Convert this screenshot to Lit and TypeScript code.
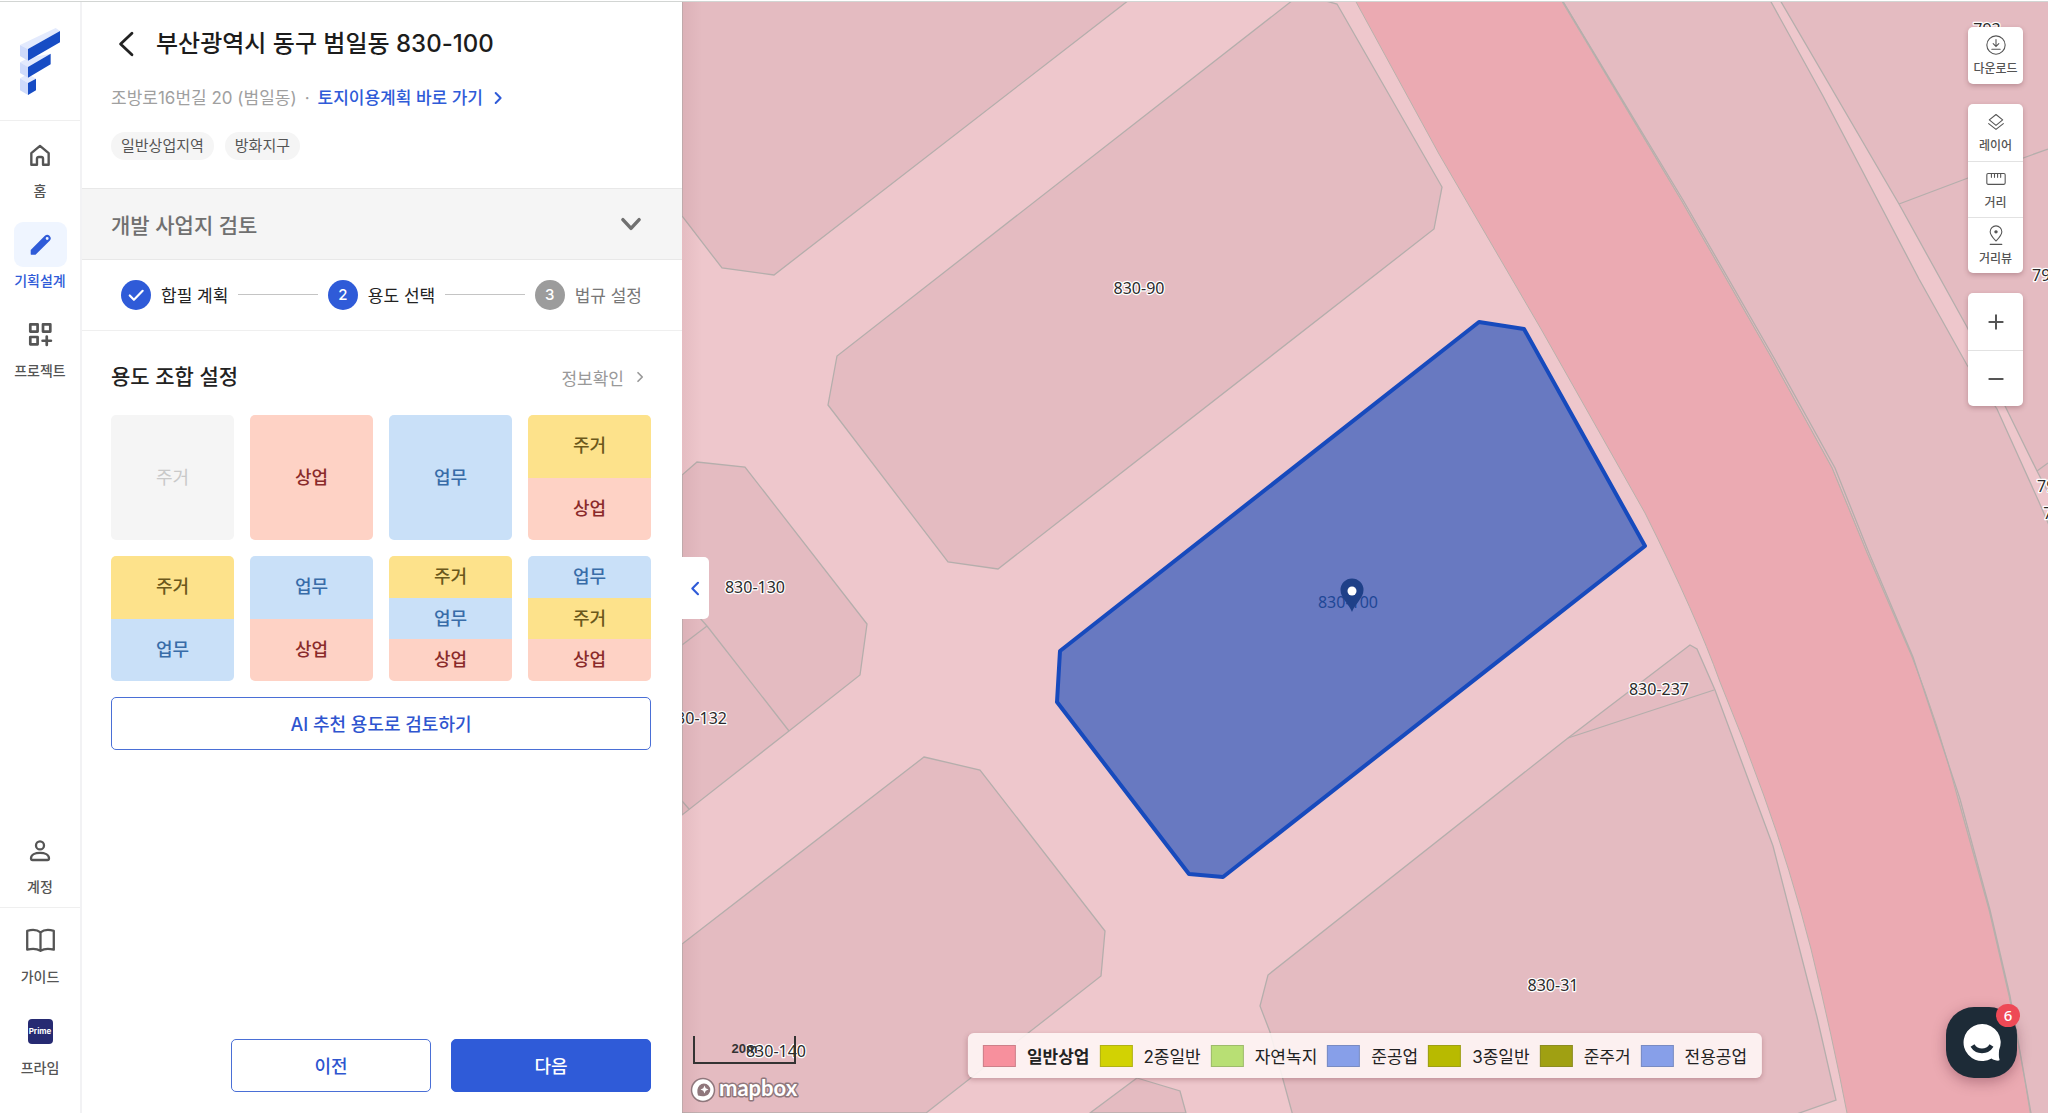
import { LitElement, html, svg, css, nothing } from "lit";
import { customElement, state } from "lit/decorators.js";
import { classMap } from "lit/directives/class-map.js";

const icons: Record<string, unknown> = {
  home: svg`<path d="M4 10.2 12 3.6l8 6.6V21h-5.2v-5.6a1.6 1.6 0 0 0-1.6-1.6h-2.4a1.6 1.6 0 0 0-1.6 1.6V21H4z" fill="none" stroke="currentColor" stroke-width="2.2" stroke-linejoin="round"/>`,
  pencil: svg`<path fill-rule="evenodd" fill="currentColor" d="M2.6 17.3 16.2 3.7a3.2 3.2 0 0 1 4.5 0l.1.1a3.2 3.2 0 0 1 0 4.5L7.2 21.9H3.4a.8.8 0 0 1-.8-.8zM18.4 4.9a1.4 1.4 0 1 0 0 2.8 1.4 1.4 0 0 0 0-2.8z"/>`,
  project: svg`<g fill="none" stroke="currentColor" stroke-width="2.6" stroke-linejoin="round"><path d="M2.2 2.2h7v7h-7zM14.4 2.2h7v7h-7zM2.2 14.4h7v7h-7zM18 14v8M14 18h8" stroke-linecap="round"/></g>`,
  account: svg`<g fill="none" stroke="currentColor" stroke-width="2.3"><circle cx="12" cy="6.4" r="4"/><path d="M3 19.2c0-3.6 4.4-5.4 9-5.4s9 1.8 9 5.4c0 1.2-.6 1.8-1.6 1.8H4.6c-1 0-1.6-.6-1.6-1.8z" stroke-linejoin="round"/></g>`,
  guide: svg`<path d="M12 5.200C9.200 3 5 2.900 1 4v15.600c4-1.100 8.200-.9 11 1 2.800-1.900 7-2.100 11-1V4c-4-1.100-8.200-1-11 1.200zm0 0v15" fill="none" stroke="currentColor" stroke-width="1.900" stroke-linejoin="round"/>`,
  download: svg`<g fill="none" stroke="currentColor" stroke-width="1.300" stroke-linecap="round"><circle cx="12" cy="12" r="11"/><path d="M12 5.500v8M8.600 10.400 12 13.700l3.400-3.300M7 17h10"/></g>`,
  layer: svg`<g fill="none" stroke="currentColor" stroke-width="1.300" stroke-linejoin="round" stroke-linecap="round"><path d="M12 3l8 6.500-8 6.500-8-6.500zM3.200 14l8.800 6.800 8.800-6.800"/></g>`,
  ruler: svg`<g fill="none" stroke="currentColor" stroke-width="1.300" stroke-linecap="round"><rect x="1" y="5.400" width="22" height="13" rx="1.500"/><path d="M6.500 6v4M10.200 6v4M13.900 6v4M17.600 6v4"/></g>`,
  view: svg`<g fill="none" stroke="currentColor" stroke-width="1.300" stroke-linecap="round"><path d="M12 19.200c-3.600-3.800-7-7.200-7-11.200a7 7 0 0 1 14 0c0 4-3.400 7.400-7 11.200z"/><circle cx="12" cy="8.200" r="1.400" fill="currentColor"/><path d="M5 23.200h14"/></g>`,
  plus: svg`<path d="M12 4v16M4 12h16" stroke="currentColor" stroke-width="2.400" stroke-linecap="round"/>`,
  minus: svg`<path d="M4 12h16" stroke="currentColor" stroke-width="2.400" stroke-linecap="round"/>`,
  left: svg`<path d="M15.500 4 7.500 12l8 8" fill="none" stroke="currentColor" stroke-width="3" stroke-linecap="round" stroke-linejoin="round"/>`,
  back: svg`<path d="M17.500 2 7 12l10.500 10" fill="none" stroke="currentColor" stroke-width="2.600" stroke-linecap="round" stroke-linejoin="round"/>`,
  right: svg`<path d="m8 3.500 8.500 8.500L8 20.500" fill="none" stroke="currentColor" stroke-width="3.400" stroke-linecap="round" stroke-linejoin="round"/>`,
  down: svg`<path d="m4.500 8 7.500 8 7.500-8" fill="none" stroke="currentColor" stroke-width="3.200" stroke-linecap="round" stroke-linejoin="round"/>`,
  check: svg`<path d="m4.500 12.500 5 5.200L20 7" fill="none" stroke="currentColor" stroke-width="2.600" stroke-linecap="round" stroke-linejoin="round"/>`,
};

const icon = (name: string, size: number) =>
  html`<svg width=${size} height=${size} viewBox="0 0 24 24" aria-hidden="true">${icons[name]}</svg>`;

const base = css`
  * { box-sizing: border-box; }
  svg { display: block; flex: none; }
  button { font: inherit; color: inherit; border: 0; background: none; padding: 0; margin: 0; cursor: pointer; }
  a { color: inherit; text-decoration: none; }
`;

@customElement("side-nav")
class SideNav extends LitElement {
  static styles = [base, css`
    :host { display: flex; flex-direction: column; flex: none; width: 82px; border-right: 2px solid #f2f2f4; background: #fff; color: #555; }
    .brand { display: flex; justify-content: center; height: 119px; padding-top: 25px; border-bottom: 1px solid #efefef; }
    .group { display: flex; flex-direction: column; gap: 21px; padding-top: 11px; }
    .top { flex: 1; }
    .account { padding-bottom: 10px; border-bottom: 1px solid #efefef; }
    .help { padding: 10px 0 35px; gap: 22px; }
    .item { display: flex; flex-direction: column; align-items: center; gap: 4px; font-size: 14px; line-height: 20px; font-weight: 500; white-space: nowrap; }
    .tile { display: grid; place-items: center; width: 53px; height: 45px; border-radius: 9px; }
    .active { color: #2f5bd8; }
    .active .tile { background: #eff5ff; }
    .prime { display: grid; place-items: center; width: 25px; height: 25px; border-radius: 4px; background: #262a72; color: #fff; font: 700 8px/25px Inter, sans-serif; }
  `];

  private item(name: string, label: string, size: number, active = false) {
    return html`<a class=${classMap({ item: true, active })} href="#">
      <span class="tile">${name === "prime" ? html`<span class="prime">Prime</span>` : icon(name, size)}</span>
      ${label}
    </a>`;
  }

  render() {
    return html`
      <a class="brand" href="#" aria-label="home">
        <svg width="42" height="70" viewBox="57 81 126 210">
          <path fill="#e3eafd" d="M60 135 167 84l13 9-96 54zM60 187l24-13 68-13-68 41zM60 235l24-13 24 14-24 13z"/>
          <path fill="#cfdbfb" d="M60 135l24 12v35l-24-14zM60 187l24 14v32l-24-14zM60 235l24 14v36l-24-14z"/>
          <path fill="#174cc4" d="M84 147l96-54v34l-96 55zM84 201l68-40v32l-68 40zM84 249l24-13v35l-24 14z"/>
        </svg>
      </a>
      <nav class="group top">
        ${this.item("home", "홈", 26)}
        ${this.item("pencil", "기획설계", 25, true)}
        ${this.item("project", "프로젝트", 25)}
      </nav>
      <nav class="group account">${this.item("account", "계정", 24)}</nav>
      <nav class="group help">
        ${this.item("guide", "가이드", 29)}
        ${this.item("prime", "프라임", 25)}
      </nav>
    `;
  }
}

type Use = "home" | "shop" | "work";
const useNames: Record<Use, string> = { home: "주거", shop: "상업", work: "업무" };
const combos: { uses: Use[]; disabled?: boolean }[] = [
  { uses: ["home"], disabled: true },
  { uses: ["shop"] },
  { uses: ["work"] },
  { uses: ["home", "shop"] },
  { uses: ["home", "work"] },
  { uses: ["work", "shop"] },
  { uses: ["home", "work", "shop"] },
  { uses: ["work", "home", "shop"] },
];

@customElement("plan-panel")
class PlanPanel extends LitElement {
  static styles = [base, css`
    :host { display: flex; flex-direction: column; flex: none; width: 600px; background: #fff; color: #222; font-size: 17px; }
    h1, h2 { margin: 0; font-weight: 500; }
    .head { padding: 24px 29px 28px; border-bottom: 1px solid #e8e8e8; }
    .title { display: flex; align-items: center; gap: 17px; padding-left: 2px; }
    .title h1 { font-size: 24px; line-height: 36px; color: #1c1c1c; }
    .address { display: flex; align-items: center; gap: 8px; margin-top: 24px; line-height: 24px; color: #a0a0a0; }
    .address a { display: flex; align-items: center; gap: 8px; color: #2f5bd8; font-weight: 500; }
    .tags { display: flex; gap: 11px; margin: 22px 0 0; padding: 0; list-style: none; }
    .tags li { padding: 0 10px; border-radius: 14px; background: #f5f5f5; color: #555; font-size: 15px; line-height: 28px; }
    .fold { display: flex; align-items: center; justify-content: space-between; width: 100%; height: 71px; padding: 0 38px 0 29px; border-bottom: 1px solid #e8e8e8; background: #f5f5f5; color: #707070; font-size: 21px; font-weight: 500; }
    .steps { display: flex; align-items: center; gap: 10px; height: 71px; margin: 0; padding: 0 40px 1px 39px; border-bottom: 1px solid #efefef; list-style: none; }
    .step { display: flex; align-items: center; gap: 10px; white-space: nowrap; }
    .bar { flex: 1; height: 1px; background: #c4c4c4; }
    .dot { display: grid; place-items: center; width: 30px; height: 30px; border-radius: 50%; background: #2f5bd8; color: #fff; font-size: 15px; font-weight: 500; }
    .later { color: #777; }
    .later .dot { background: #9c9c9c; }
    .body { display: flex; flex-direction: column; flex: 1; padding: 30px 31px 21px 29px; }
    .bar-title { display: flex; align-items: center; justify-content: space-between; padding-right: 5px; }
    .bar-title h2 { font-size: 21px; line-height: 32px; }
    .info { display: flex; align-items: center; gap: 10px; color: #999; }
    .grid { display: grid; grid-template-columns: repeat(4, 1fr); grid-auto-rows: 125px; gap: 16px; margin-top: 22px; }
    .combo { display: flex; flex-direction: column; overflow: hidden; border-radius: 5px; font-size: 18px; font-weight: 500; }
    .part { flex: 1; display: grid; place-items: center; line-height: 24px; width: 100%; }
    .home { background: #fde28b; color: #6b581b; }
    .shop { background: #fed2c5; color: #8a2b2b; }
    .work { background: #c9e0f8; color: #386ca8; }
    .combo:disabled { cursor: default; }
    .combo:disabled .part { background: #f5f5f5; color: #c9c9c9; font-weight: 400; }
    .line { height: 53px; padding-bottom: 2px; border: 1px solid #4a6fd6; border-radius: 5px; color: #2f55cf; font-size: 18px; font-weight: 500; }
    .ai { margin-top: 16px; flex: none; }
    .actions { display: flex; justify-content: flex-end; gap: 20px; margin-top: auto; }
    .actions button { width: 200px; }
    .next { background: #2f5bd8; color: #fff; border-color: #2f5bd8; }
  `];

  @state() private selected = -1;

  render() {
    return html`
      <header class="head">
        <div class="title"><button aria-label="뒤로">${icon("back", 26)}</button><h1>부산광역시 동구 범일동 830-100</h1></div>
        <div class="address">
          <span>조방로16번길 20 (범일동)</span><span>·</span>
          <a href="#">토지이용계획 바로 가기 ${icon("right", 14)}</a>
        </div>
        <ul class="tags"><li>일반상업지역</li><li>방화지구</li></ul>
      </header>
      <button class="fold" aria-expanded="false">개발 사업지 검토 ${icon("down", 26)}</button>
      <ol class="steps">
        <li class="step"><span class="dot">${icon("check", 20)}</span>합필 계획</li>
        <li class="bar" role="presentation"></li>
        <li class="step"><span class="dot">2</span>용도 선택</li>
        <li class="bar" role="presentation"></li>
        <li class="step later"><span class="dot">3</span>법규 설정</li>
      </ol>
      <section class="body">
        <div class="bar-title"><h2>용도 조합 설정</h2><button class="info">정보확인 ${icon("right", 12)}</button></div>
        <div class="grid">
          ${combos.map((c, i) => html`
            <button class="combo" ?disabled=${c.disabled ?? false} aria-pressed=${this.selected === i ? "true" : "false"} @click=${() => (this.selected = i)}>
              ${c.uses.map((u) => html`<span class="part ${u}">${useNames[u]}</span>`)}
            </button>`)}
        </div>
        <button class="line ai">AI 추천 용도로 검토하기</button>
        <div class="actions"><button class="line">이전</button><button class="line next">다음</button></div>
      </section>
    `;
  }
}

const parcels = [
  "682,0 1129,0 774,275 722,268 682,216",
  "1293,0 1322,0 1337,4 1442,187 1434,229 998,569 948,562 828,405 837,356",
  "682,475 697,462 745,467 867,624 860,675 789,731 682,815",
  "924,757 980,770 1105,931 1101,976 926,1113 682,1113 682,944",
  "1137,1078 1180,1091 1186,1113 1090,1113",
  "1690,645 1697,649 1715,690 1773,846 1817,1017 1836,1100 1791,1116 1293,1116 1270,1032 1260,1006 1268,975 1568,738",
  "1562,0 1770,0 1823,96 1919,279 1967,365 1997,409 2039,502 2052,532 2052,1117 2030,1117 2009,996 1989,910 1958,799 1912,657 1867,553 1832,468 1771,357 1681,200",
  "1780,0 1899,204 1967,327 2006,408 2037,471 2052,500 2052,0",
];
const seams = [
  "699,617 707,626 789,731", "707,626 682,645", "682,801 689,809", "1568,738 1714,690",
  "1899,204 1968,178 2048,149", "2037,471 2048,463",
  "1562,0 1683,200 1774,358 1835,468 1869,553 1913,657 1960,799 1990,910 2010,996 2031,1113",
];
const plotNames: [string, number, number][] = [
  ["830-90", 1139, 294], ["830-130", 755, 593], ["830-132", 697, 724], ["830-237", 1659, 695],
  ["830-31", 1553, 991], ["830-140", 776, 1057], ["793", 1987, 35], ["792-1", 2053, 281], ["792-3", 2058, 492], ["791", 2057, 519],
];
const zones: [string, string][] = [
  ["일반상업", "#f7909d"], ["2종일반", "#d2d203"], ["자연녹지", "#b8df74"], ["준공업", "#879fe9"],
  ["3종일반", "#b8ba00"], ["준주거", "#a0a012"], ["전용공업", "#879fe9"],
];

@customElement("plot-map")
class PlotMap extends LitElement {
  static styles = [base, css`
    :host { position: relative; display: block; flex: 1; min-width: 0; overflow: hidden; background: #eec7cc; color: #222; }
    .canvas { width: 100%; height: 100%; }
    .plots { fill: #e4bbc1; stroke: #b5aeac; stroke-width: 1.300; }
    .seams { fill: none; stroke: #b5aeac; stroke-width: 1.300; }
    .road { fill: #ebaab2; stroke: #b9b1ab; stroke-width: 1; }
    .picked { fill: #6879c1; stroke: #174abd; stroke-width: 4; stroke-linejoin: round; }
    .names { font: 16px "Noto Sans", "Open Sans", sans-serif; text-anchor: middle; fill: #2a2a2a; stroke: #fff; stroke-width: 2.500; stroke-linejoin: round; paint-order: stroke; }
    .picked-name { font: 16px "Noto Sans", "Open Sans", sans-serif; text-anchor: middle; fill: #1f4796; }
    .edge { position: absolute; inset: 0 auto 0 0; width: 20px; background: linear-gradient(90deg, rgba(120, 60, 70, .08), transparent); }
    .collapse { position: absolute; left: 0; top: 555px; display: grid; place-items: center; width: 27px; height: 62px; border-radius: 0 5px 5px 0; background: #fff; color: #2f5bd8; }
    .tools { position: absolute; top: 25px; right: 25px; display: flex; flex-direction: column; gap: 20px; width: 55px; }
    .stack { display: flex; flex-direction: column; border-radius: 5px; background: #fff; box-shadow: 0 2px 5px rgba(90, 40, 50, .3); color: #555; font-size: 12px; font-weight: 500; line-height: 18px; }
    .tool { display: flex; flex-direction: column; align-items: center; justify-content: center; gap: 5px; height: 57px; white-space: nowrap; }
    .labelled { padding-top: 1px; }
    .tool + .tool { height: 56px; border-top: 1px solid #e2e2e2; }
    .legend { position: absolute; left: 50%; bottom: 35px; display: flex; gap: 10px; margin: 0; padding: 0 15px; height: 45px; align-items: center; transform: translateX(-50%); border-radius: 6px; background: rgba(255, 247, 246, .88); box-shadow: 0 2px 5px rgba(110, 50, 60, .3); list-style: none; font-size: 17px; white-space: nowrap; }
    .zone { display: flex; align-items: center; gap: 11px; }
    .zone:first-child { font-weight: 700; }
    .swatch { width: 33px; height: 22px; border: 1px solid rgba(80, 80, 80, .25); }
    .scale { position: absolute; left: 11px; bottom: 49px; width: 103px; height: 28px; border: 2px solid #333; border-top: 0; text-align: center; font: 700 13px/25px "Liberation Sans", sans-serif; color: #333; }
    .mapbox { position: absolute; left: 7px; bottom: 8px; }
    .word { font: 700 22px Lato, sans-serif; fill: #fff; stroke: #8f777c; stroke-width: 3; stroke-linejoin: round; paint-order: stroke; }
    .chat { position: absolute; right: 31px; bottom: 35px; width: 71px; height: 71px; border-radius: 28px; background: #1d2b37; box-shadow: 0 4px 14px rgba(80, 20, 40, .35); display: grid; place-items: center; }
    .badge { position: absolute; top: -3px; right: -3px; width: 24px; height: 23px; border-radius: 12px; background: #ee4956; color: #fff; font: 500 15px/23px "Noto Sans", sans-serif; text-align: center; }
  `];

  private tool(name: string, label: string, text = true) {
    return html`<button class=${classMap({ tool: true, labelled: text })} aria-label=${label}>${icon(name, 20)}${text ? html`<span>${label}</span>` : nothing}</button>`;
  }

  render() {
    return html`
      <svg class="canvas" viewBox="682 2 1366 1111" preserveAspectRatio="xMinYMin slice">
        <g class="plots">${parcels.map((p) => svg`<polygon points=${p}/>`)}</g>
        <path class="road" d="M1355 0L1439 154 1541 329 1645 513Q1696 615 1720 682 1744 740 1764 796 1790 868 1811 949 1832 1035 1848 1118H2031Q2022 1060 2009 996L1989 910 1958 799Q1938 722 1912 657L1867 553 1832 468 1771 357 1681 200 1561 0z"/>
        <g class="seams">${seams.map((p) => svg`<polyline points=${p}/>`)}</g>
        <polygon class="picked" points="1479,322 1524,329 1645,546 1223,877 1189,874 1057,702 1060,651"/>
        <g class="names">${plotNames.map(([t, x, y]) => svg`<text x=${x} y=${y}>${t}</text>`)}</g>
        <text class="picked-name" x="1348" y="608">830-100</text>
        <path fill="#1f4088" d="M1352 612c-3-8-11.500-14-11.500-22a11.500 11.500 0 0 1 23 0c0 8-8.500 14-11.500 22z"/>
        <circle cx="1352" cy="591" r="4.500" fill="#fff"/>
      </svg>
      <div class="edge"></div>
      <button class="collapse" aria-label="패널 접기">${icon("left", 17)}</button>
      <div class="tools">
        <div class="stack">${this.tool("download", "다운로드")}</div>
        <div class="stack">${this.tool("layer", "레이어")}${this.tool("ruler", "거리")}${this.tool("view", "거리뷰")}</div>
        <div class="stack">${this.tool("plus", "확대", false)}${this.tool("minus", "축소", false)}</div>
      </div>
      <div class="scale">20m</div>
      <svg class="mapbox" width="112" height="30" viewBox="0 0 112 30">
        <circle cx="14" cy="15" r="11.500" fill="#fff" stroke="#8f777c" stroke-width="1.500"/>
        <path fill="#8f777c" d="M9 20.500c-1.200-4-.8-7.800 1.400-10a6.300 6.300 0 1 1 8.800 9c-2.500 2-6.200 2.300-10.200 1z"/>
        <path fill="#fff" d="M15.500 10.500l1.200 2.800 2.800 1.200-2.800 1.200-1.200 2.800-1.200-2.800-2.800-1.200 2.800-1.200z"/>
        <text class="word" x="30" y="21">mapbox</text>
      </svg>
      <ul class="legend">${zones.map(([n, c]) => html`<li class="zone"><span class="swatch" style="background:${c}"></span>${n}</li>`)}</ul>
      <button class="chat" aria-label="채팅">
        <svg width="38" height="38" viewBox="0 0 38 38">
          <path fill="#fff" d="M19 0a18.500 18.500 0 1 0 9.500 34.400c2 1.400 4.800 2.400 7.300 2.200.7 0 .9-.6.7-1.200-1-2.800-.6-6.400-.4-9.400A18.500 18.500 0 0 0 19 0z"/>
          <path fill="none" stroke="#1d2b37" stroke-width="4.600" d="M9.500 21.500c4.500 7.200 14.500 7.200 19 0"/>
        </svg>
        <span class="badge">6</span>
      </button>
    `;
  }
}

@customElement("app-root")
class AppRoot extends LitElement {
  static styles = [base, css`
    :host { display: flex; box-sizing: border-box; min-height: 100vh; padding-top: 1px; background: #fff; font-family: Inter, "Noto Sans CJK KR", sans-serif; }
    .frame { display: flex; flex: 1; min-width: 0; border-top: 1px solid #d2d5d3; }
  `];
  render() {
    return html`<main class="frame"><side-nav></side-nav><plan-panel></plan-panel><plot-map></plot-map></main>`;
  }
}
